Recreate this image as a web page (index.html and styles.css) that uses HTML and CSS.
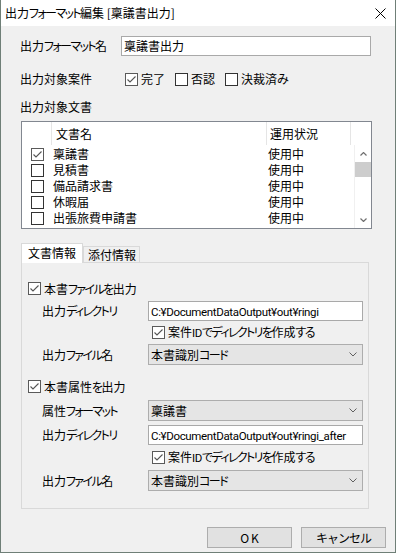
FILE: index.html
```html
<!DOCTYPE html>
<html lang="ja">
<head>
<meta charset="utf-8">
<title>出力フォーマット編集</title>
<link rel="stylesheet" href="styles.css">
</head>
<body>
<div class="window">
  <div class="titlebar">
    <span class="title">出力<span class="kn">フォーマット</span>編集 [稟議書出力]</span>
    <svg class="close" width="11" height="11" viewBox="0 0 11 11"><path d="M0.5 0.5 L10.5 10.5 M10.5 0.5 L0.5 10.5" stroke="#000" stroke-width="1" fill="none"/></svg>
  </div>
  <div class="content">
    <div class="row row-name">
      <span class="lbl lbl-name">出力<span class="kn">フォーマット</span>名</span>
      <div class="textbox tb-name">稟議書出力</div>
    </div>
    <div class="row row-status">
      <span class="lbl lbl-status">出力対象案件</span>
      <span class="cb"><span class="box checked"><svg viewBox="0 0 11 11"><polyline points="1.5,5.5 4,8 9.5,2.5" /></svg></span><span class="cb-text">完了</span></span>
      <span class="cb"><span class="box"></span><span class="cb-text">否認</span></span>
      <span class="cb"><span class="box"></span><span class="cb-text">決裁済<span class="kn">み</span></span></span>
    </div>
    <div class="section-label">出力対象文書</div>
    <div class="list">
      <div class="list-head">
        <div class="hcol hc0"></div>
        <div class="hcol hc1">文書名</div>
        <div class="hcol hc2">運用状況</div>
        <div class="hcol hc3"></div>
      </div>
      <div class="list-body">
        <div class="rows">
          <div class="lrow"><span class="box checked"><svg viewBox="0 0 11 11"><polyline points="1.5,5.5 4,8 9.5,2.5" /></svg></span><span class="name">稟議書</span><span class="status">使用中</span></div>
          <div class="lrow"><span class="box"></span><span class="name">見積書</span><span class="status">使用中</span></div>
          <div class="lrow"><span class="box"></span><span class="name">備品請求書</span><span class="status">使用中</span></div>
          <div class="lrow"><span class="box"></span><span class="name">休暇届</span><span class="status">使用中</span></div>
          <div class="lrow"><span class="box"></span><span class="name">出張旅費申請書</span><span class="status">使用中</span></div>
        </div>
        <div class="scrollbar">
          <div class="sb-btn"><svg width="7" height="4" viewBox="0 0 7 4"><polyline points="0.5,3.5 3.5,0.5 6.5,3.5"/></svg></div>
          <div class="sb-thumb"></div>
          <div class="sb-track"></div>
          <div class="sb-btn"><svg width="7" height="4" viewBox="0 0 7 4"><polyline points="0.5,0.5 3.5,3.5 6.5,0.5"/></svg></div>
        </div>
      </div>
    </div>
    <div class="tabs">
      <div class="tab-strip">
        <div class="tab active">文書情報</div>
        <div class="tab">添付情報</div>
      </div>
      <div class="tab-panel">
        <div class="prow cbrow first">
          <span class="cb"><span class="box checked"><svg viewBox="0 0 11 11"><polyline points="1.5,5.5 4,8 9.5,2.5" /></svg></span><span class="cb-text">本書<span class="kn">ファイルを</span>出力</span></span>
        </div>
        <div class="prow field gap6">
          <span class="plbl">出力<span class="kn">ディレクトリ</span></span>
          <div class="textbox tb-field"><span class="latin">C:¥DocumentDataOutput¥out¥ringi</span></div>
        </div>
        <div class="prow subcb gap5">
          <span class="cb"><span class="box checked"><svg viewBox="0 0 11 11"><polyline points="1.5,5.5 4,8 9.5,2.5" /></svg></span><span class="cb-text">案件<span class="latin">ID</span><span class="kn">でディレクトリを</span>作成<span class="kn">する</span></span></span>
        </div>
        <div class="prow field combo-row gap5">
          <span class="plbl">出力<span class="kn">ファイル</span>名</span>
          <div class="combo"><span>本書識別<span class="kn">コード</span></span><svg width="8" height="5" viewBox="0 0 8 5"><polyline points="0.5,0.5 4,4 7.5,0.5"/></svg></div>
        </div>
        <div class="prow cbrow gap15">
          <span class="cb"><span class="box checked"><svg viewBox="0 0 11 11"><polyline points="1.5,5.5 4,8 9.5,2.5" /></svg></span><span class="cb-text">本書属性<span class="kn">を</span>出力</span></span>
        </div>
        <div class="prow field combo-row gap7">
          <span class="plbl">属性<span class="kn">フォーマット</span></span>
          <div class="combo"><span>稟議書</span><svg width="8" height="5" viewBox="0 0 8 5"><polyline points="0.5,0.5 4,4 7.5,0.5"/></svg></div>
        </div>
        <div class="prow field gap4">
          <span class="plbl">出力<span class="kn">ディレクトリ</span></span>
          <div class="textbox tb-field"><span class="latin">C:¥DocumentDataOutput¥out¥ringi_after</span></div>
        </div>
        <div class="prow subcb gap6">
          <span class="cb"><span class="box checked"><svg viewBox="0 0 11 11"><polyline points="1.5,5.5 4,8 9.5,2.5" /></svg></span><span class="cb-text">案件<span class="latin">ID</span><span class="kn">でディレクトリを</span>作成<span class="kn">する</span></span></span>
        </div>
        <div class="prow field combo-row gap6">
          <span class="plbl">出力<span class="kn">ファイル</span>名</span>
          <div class="combo"><span>本書識別<span class="kn">コード</span></span><svg width="8" height="5" viewBox="0 0 8 5"><polyline points="0.5,0.5 4,4 7.5,0.5"/></svg></div>
        </div>
      </div>
    </div>
    <div class="buttons">
      <div class="btn"><span class="ok">OK</span></div>
      <div class="btn"><span class="kn-btn">キャンセル</span></div>
    </div>
  </div>
</div>
</body>
</html>
```
FILE: styles.css
```css
html, body {
  margin: 0;
  padding: 0;
  background: #f0f0f0;
}
body {
  font-family: "Noto Sans CJK JP", "Noto Sans", sans-serif;
  font-size: 12px;
  font-feature-settings: "palt";
  color: #000;
  line-height: 16px;
}
.kn {
  letter-spacing: -1.6px;
}
.latin {
  font-family: "Roboto", "Liberation Sans", sans-serif;
  font-size: 11.5px;
  letter-spacing: -0.35px;
}
.window {
  width: 396px;
  height: 553px;
  box-sizing: border-box;
  border: 1px solid #6f7f77;
  border-top: none;
  background: #f0f0f0;
  display: flex;
  flex-direction: column;
  overflow: hidden;
}
.titlebar {
  height: 26px;
  flex: none;
  background: #fff;
  display: flex;
  align-items: center;
  padding-left: 4px;
}
.title {
  white-space: nowrap;
}
.close {
  margin-left: auto;
  margin-right: 9px;
  margin-top: 1px;
}
.content {
  flex: 1;
  display: flex;
  flex-direction: column;
  padding: 0 9px 0 19px;
}
.row {
  display: flex;
  align-items: center;
  height: 20px;
  flex: none;
}
.row-name { margin-top: 10px; }
.row-status { margin-top: 13px; }
.lbl { white-space: nowrap; }
.lbl-name { width: 101px; }
.lbl-status { width: 105px; }
.textbox {
  box-sizing: border-box;
  height: 20px;
  background: #fff;
  border: 1px solid #a9a9a9;
  padding-left: 2px;
  line-height: 18px;
  white-space: nowrap;
  overflow: hidden;
}
.tb-name { width: 250px; }
.cb {
  display: inline-flex;
  align-items: center;
  white-space: nowrap;
}
.row-status .cb { margin-right: 10px; }
.box {
  box-sizing: border-box;
  width: 13px;
  height: 13px;
  border: 1px solid #333;
  background: #fff;
  flex: none;
  display: inline-block;
}
.box.checked { border-color: #5a5a5a; }
.box svg {
  display: block;
  width: 11px;
  height: 11px;
}
.box svg polyline {
  fill: none;
  stroke: #555;
  stroke-width: 1.1;
}
.cb-text { margin-left: 3px; }
.section-label {
  margin-top: 8px;
  height: 20px;
  line-height: 20px;
  flex: none;
}
.list {
  margin-top: 4px;
  margin-left: 1px;
  width: 351px;
  height: 108px;
  box-sizing: border-box;
  border: 1px solid #828790;
  background: #fff;
  flex: none;
  display: flex;
  flex-direction: column;
}
.list-head {
  height: 23px;
  display: flex;
  flex: none;
}
.hcol {
  box-sizing: border-box;
  height: 23px;
  line-height: 23px;
  border-right: 1px solid #e5e5e5;
  white-space: nowrap;
}
.hc0 { width: 30px; }
.hc1 { width: 215px; padding-left: 4px; }
.hc2 { width: 84px; padding-left: 3px; }
.hc3 { flex: 1; border-right: none; }
.list-body {
  flex: 1;
  display: flex;
  overflow: hidden;
}
.rows {
  flex: 1;
  padding-top: 1px;
}
.lrow {
  height: 16px;
  display: flex;
  align-items: center;
  white-space: nowrap;
}
.lrow .box { margin-left: 9px; }
.lrow .name { margin-left: 9px; width: 215px; }
.scrollbar {
  width: 17px;
  flex: none;
  display: flex;
  flex-direction: column;
  background: #fff;
  border-left: 1px solid #f0f0f0;
  box-sizing: border-box;
}
.sb-btn {
  height: 17px;
  display: flex;
  align-items: center;
  justify-content: center;
}
.sb-btn svg polyline {
  fill: none;
  stroke: #707070;
  stroke-width: 1.2;
}
.sb-thumb {
  height: 15px;
  background: #cdcdcd;
}
.sb-track { flex: 1; }
.tabs {
  margin-top: 14px;
  margin-left: 1px;
  flex: none;
  display: flex;
  flex-direction: column;
}
.tab-strip {
  display: flex;
  align-items: flex-end;
  height: 19px;
}
.tab {
  box-sizing: border-box;
  height: 16px;
  line-height: 15px;
  border: 1px solid #d9d9d9;
  border-bottom: none;
  background: #f0f0f0;
  padding: 0 3px 0 4px;
  white-space: nowrap;
}
.tab.active {
  height: 20px;
  line-height: 18px;
  margin-bottom: -1px;
  background: #fff;
  padding: 0 6px;
  position: relative;
  z-index: 1;
  width: 62px;
}
.tab-panel {
  box-sizing: border-box;
  width: 348px;
  height: 247px;
  border: 1px solid #d9d9d9;
  background: #f0f0f0;
  display: flex;
  flex-direction: column;
}
.prow {
  display: flex;
  align-items: center;
  flex: none;
}
.cbrow { height: 13px; padding-left: 6px; }
.cbrow.first { margin-top: 19px; }
.subcb { height: 13px; padding-left: 130px; }
.field { height: 20px; padding-left: 20px; }
.combo-row { height: 21px; }
.gap4 { margin-top: 4px; }
.gap5 { margin-top: 5px; }
.gap6 { margin-top: 6px; }
.gap7 { margin-top: 7px; }
.gap15 { margin-top: 15px; }
.plbl {
  width: 106px;
  white-space: nowrap;
}
.tb-field { width: 215px; }
.combo {
  box-sizing: border-box;
  width: 215px;
  height: 21px;
  background: #e5e5e5;
  border: 1px solid #adadad;
  display: flex;
  align-items: center;
  padding-left: 2px;
  padding-right: 5px;
  white-space: nowrap;
}
.combo svg {
  margin-left: auto;
}
.combo svg polyline {
  fill: none;
  stroke: #606060;
  stroke-width: 1;
}
.buttons {
  margin-top: 18px;
  display: flex;
  justify-content: flex-end;
  gap: 9px;
  flex: none;
}
.btn {
  box-sizing: border-box;
  width: 85px;
  height: 21px;
  background: #e1e1e1;
  border: 1px solid #adadad;
  text-align: center;
  line-height: 19px;
  white-space: nowrap;
}
.ok {
  letter-spacing: 2px;
  margin-right: -2px;
}
.kn-btn {
  font-feature-settings: normal;
  letter-spacing: -1px;
}
```
